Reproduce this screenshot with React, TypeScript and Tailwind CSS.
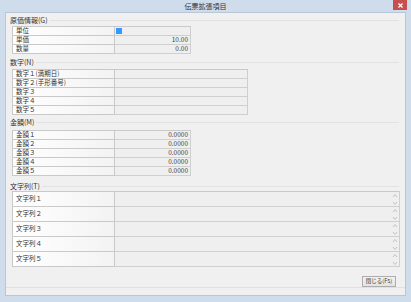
import React from "react";

const font = { fontFamily: '"Noto Sans CJK JP", "Noto Sans", sans-serif' };

type Row = { label: string; value?: React.ReactNode };

function Group({ title, gap }: { title: string; gap: string }) {
  return (
    <div className={`flex items-center h-[8px] pl-[4px] pr-[6px] ${gap}`}>
      <span className="text-[7px] leading-[8px] text-[#333] whitespace-nowrap">{title}</span>
      <div className="flex-1 ml-[2px] h-px bg-[#e2e2e2]" />
    </div>
  );
}

function Table({ rows, valueW, rowH }: { rows: Row[]; valueW: string; rowH: string }) {
  return (
    <div className="ml-[6px] flex flex-col border-t border-l border-[#c9c9c9] w-fit">
      {rows.map((r) => (
        <div key={r.label} className={`flex ${rowH}`}>
          <div className="w-[102px] flex items-center pl-[3px] border-r border-b border-[#c9c9c9] bg-gradient-to-r from-white to-[#f3f3f3] text-[6.5px] text-[#333] whitespace-nowrap">
            {r.label}
          </div>
          <div className={`${valueW} relative flex items-center justify-end pr-[2px] border-r border-b border-[#cfcfcf] bg-[#efefef] text-[6.5px] text-[#444]`}>
            {r.value}
          </div>
        </div>
      ))}
    </div>
  );
}

function Spin() {
  return (
    <svg width="6" height="13" viewBox="0 0 6 13" className="absolute right-[1px] top-px">
      <path d="M1 4 L3 1.5 L5 4" fill="none" stroke="#b8b8b8" strokeWidth="0.8" />
      <path d="M1 9 L3 11.5 L5 9" fill="none" stroke="#b8b8b8" strokeWidth="0.8" />
    </svg>
  );
}

export default function App() {
  const amounts = [1, 2, 3, 4, 5].map((n) => ({
    label: `金額${"１２３４５"[n - 1]}`,
    value: "0.0000",
  }));
  const strings = [1, 2, 3, 4, 5].map((n) => ({
    label: `文字列${"１２３４５"[n - 1]}`,
    value: <Spin />,
  }));
  return (
    <div style={font} className="w-[411px] h-[302px] bg-[#cfdcec] flex flex-col">
      <div className="h-[14px] relative flex items-center justify-center">
        <span className="text-[7px] text-[#333] leading-none">伝票拡張項目</span>
        <div className="absolute right-[4px] top-0 w-[14px] h-[10px] bg-[#c74f4f] flex items-center justify-center">
          <svg width="5" height="5" viewBox="0 0 5 5">
            <path d="M0.5 0.5 L4.5 4.5 M4.5 0.5 L0.5 4.5" stroke="white" strokeWidth="1.2" />
          </svg>
        </div>
      </div>
      <div className="mx-[5px] mb-[6px] flex-1 bg-[#f0f0f0] border border-[#b9c6d6] flex flex-col">
        <Group title="原価情報(G)" gap="mt-[3px]" />
        <div className="mt-[2px]">
          <Table
            valueW="w-[76px]"
            rowH="h-[9px]"
            rows={[
              {
                label: "単位",
                value: <span className="absolute left-[1px] top-px w-[6px] h-[6px] bg-[#3399ff]" />,
              },
              { label: "単価", value: "10.00" },
              { label: "数量", value: "0.00" },
            ]}
          />
        </div>
        <Group title="数字(N)" gap="mt-[4px]" />
        <div className="mt-[3px]">
          <Table
            valueW="w-[133px]"
            rowH="h-[9px]"
            rows={[
              { label: "数字１(満期日)" },
              { label: "数字２(手形番号)" },
              { label: "数字３" },
              { label: "数字４" },
              { label: "数字５" },
            ]}
          />
        </div>
        <Group title="金額(M)" gap="mt-[3px]" />
        <div className="mt-[4px]">
          <Table valueW="w-[76px]" rowH="h-[9px]" rows={amounts} />
        </div>
        <Group title="文字列(T)" gap="mt-[6px]" />
        <div className="mt-[1px]">
          <Table valueW="w-[285px]" rowH="h-[15px]" rows={strings} />
        </div>
        <div className="flex justify-end pr-[9px] mt-[9px]">
          <button className="w-[34px] h-[11px] border border-[#adadad] bg-gradient-to-b from-[#f2f2f2] to-[#e3e3e3] text-[5.5px] text-[#333] leading-none">
            閉じる(F5)
          </button>
        </div>
        <div className="mt-auto mb-[7px] h-px bg-[#e0e0e0]" />
      </div>
    </div>
  );
}
